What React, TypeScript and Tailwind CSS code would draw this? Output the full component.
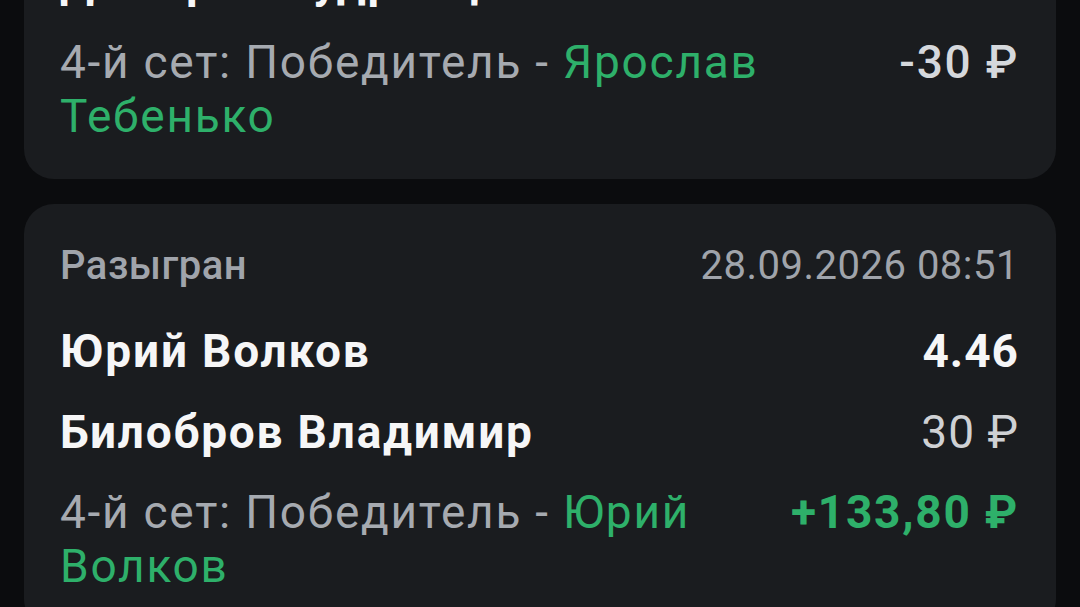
import React from "react";

type Bet = {
  id: string;
  status: string;
  date: string;
  player1: string;
  coef: string;
  player2: string;
  stake: string;
  market: string;
  pick: string;
  result: string;
  won: boolean;
};

const BETS: Bet[] = [
  {
    id: "b1",
    status: "Проигран",
    date: "28.09.2026 08:48",
    player1: "Ярослав Тебенько",
    coef: "1.82",
    player2: "Дмитрий Кудрявцев",
    stake: "30 ₽",
    market: "4-й сет: Победитель - ",
    pick: "Ярослав Тебенько",
    result: "-30 ₽",
    won: false,
  },
  {
    id: "b2",
    status: "Разыгран",
    date: "28.09.2026 08:51",
    player1: "Юрий Волков",
    coef: "4.46",
    player2: "Билобров Владимир",
    stake: "30 ₽",
    market: "4-й сет: Победитель - ",
    pick: "Юрий Волков",
    result: "+133,80 ₽",
    won: true,
  },
];

const BetCard: React.FC<{ bet: Bet }> = ({ bet }) => (
  <div className="bg-[#1a1c1f] rounded-[30px] pl-[36px] pr-[37px] pt-[38px] pb-[36px] flex flex-col">
    {/* Status + date */}
    <div className="flex items-center justify-between text-[40px] leading-[48px] tracking-[0.5px] text-[#a0a4ab]">
      <span className="font-medium">{bet.status}</span>
      <span>{bet.date}</span>
    </div>

    {/* Players */}
    <div className="mt-[33px] flex items-center justify-between text-[46px] leading-[56px] tracking-[1.8px] font-bold text-[#f6f6f7]">
      <span>{bet.player1}</span>
      <span className="tracking-[1px]">{bet.coef}</span>
    </div>
    <div className="mt-[25px] flex items-center justify-between text-[46px] leading-[56px] tracking-[1.8px]">
      <span className="font-bold text-[#f6f6f7]">{bet.player2}</span>
      <span className="tracking-[1px] text-[#cfd1d4]">{bet.stake}</span>
    </div>

    {/* Market */}
    <div className="mt-[25px] flex items-start justify-between gap-10 text-[46px] leading-[54px] tracking-[1.75px]">
      <p className="flex-1 min-w-0 text-[#a6aab0]">
        {bet.market}
        <span className="text-[#2eb06a]">{bet.pick}</span>
      </p>
      <span
        className={
          bet.won
            ? "shrink-0 font-bold text-[#2eb06a]"
            : "shrink-0 font-medium text-[#d5d8dc]"
        }
      >
        {bet.result}
      </span>
    </div>
  </div>
);

export default function App() {
  return (
    <div
      className="h-[607px] overflow-hidden bg-[#0b0c0e] px-6"
      style={{ fontFamily: "Roboto, 'Noto Sans', sans-serif" }}
    >
      <div className="-mt-[246px] flex flex-col gap-[25px]">
        {BETS.map((bet) => (
          <BetCard key={bet.id} bet={bet} />
        ))}
      </div>
    </div>
  );
}
